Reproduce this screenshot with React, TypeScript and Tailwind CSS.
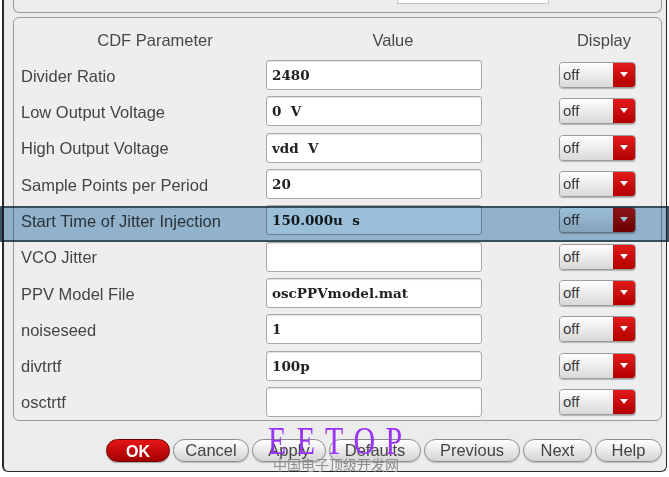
import React from 'react';

const rows: { label: string; value: string }[] = [
  { label: 'Divider Ratio', value: '2480' },
  { label: 'Low Output Voltage', value: '0 V' },
  { label: 'High Output Voltage', value: 'vdd V' },
  { label: 'Sample Points per Period', value: '20' },
  { label: 'Start Time of Jitter Injection', value: '150.000u s' },
  { label: 'VCO Jitter', value: '' },
  { label: 'PPV Model File', value: 'oscPPVmodel.mat' },
  { label: 'noiseseed', value: '1' },
  { label: 'divtrtf', value: '100p' },
  { label: 'osctrtf', value: '' },
];

const buttons = [
  { label: 'Cancel', w: 'w-[76px]' },
  { label: 'Apply', w: 'w-[74px]' },
  { label: 'Defaults', w: 'w-[92px]' },
  { label: 'Previous', w: 'w-[96px]' },
  { label: 'Next', w: 'w-[69px]' },
  { label: 'Help', w: 'w-[67px]' },
];

const OffSelect = () => (
  <div className="flex h-[26px] w-[77px] overflow-hidden rounded-[4px] border border-[#9c9c9c] shadow-[0_1px_1px_rgba(0,0,0,0.25)]">
    <div className="flex-1 bg-gradient-to-b from-white to-[#d9d9d9] pl-[3px] text-[15px] leading-[24px] text-[#3a3a3a]">
      off
    </div>
    <div className="flex w-[22px] items-center justify-center bg-gradient-to-b from-[#e31a1a] to-[#b30000]">
      <svg width="8" height="6" viewBox="0 0 8 6">
        <path d="M0 0 H8 L4 5 Z" fill="#fff" />
      </svg>
    </div>
  </div>
);

export default function App() {
  return (
    <div className="relative h-[477px] w-[669px] overflow-hidden bg-white font-['Liberation_Sans',sans-serif]">
      <div className="ml-[2px] h-[472px] w-[665px] rounded-b-[6px] border-b border-l-2 border-r border-[#2a2a2a] bg-[#ececec] pl-[9px] pr-[4px]">
        {/* top panel (cut off) */}
        <div className="flex h-[13px] w-[649px] rounded-b-[6px] border-x border-b border-[#9a9a9a]">
          <div className="ml-[383px] h-[4px] w-[152px] border-x border-b border-[#c4c4c4] bg-white" />
        </div>

        {/* parameter panel */}
        <div className="mt-[4px] w-[649px] rounded-[6px] border border-[#9a9a9a] bg-[#eeeeee]">
          <div className="flex h-[39px] pt-[13px] text-[16.5px] leading-[19px] text-[#484848]">
            <span className="ml-[7px] w-[268px] text-center">CDF Parameter</span>
            <span className="w-[208px] text-center">Value</span>
            <span className="ml-[72px] w-[70px] text-center">Display</span>
          </div>
          {rows.map((r, i) => (
            <div key={r.label} className="relative flex h-[36.3px] items-center">
              <span className="w-[252px] pl-[7px] pt-[2px] text-[16.5px] text-[#444]">{r.label}</span>
              <div className="h-[30px] w-[216px] rounded-[3px] border border-[#a9a9a9] bg-white pl-[5px] font-['DejaVu_Serif',serif] text-[13.5px] font-bold leading-[28px] whitespace-pre text-[#222] shadow-[inset_0_1px_1px_rgba(0,0,0,0.12)]">
                {r.value.replace(' ', '  ')}
              </div>
              <div className="ml-[77px]">
                <OffSelect />
              </div>
              {i === 4 && (
                <div className="pointer-events-none absolute -left-[14px] -right-[8px] top-[4px] h-[36px] border-2 border-[#3b5363] bg-[#9bbfd9] mix-blend-multiply" />
              )}
            </div>
          ))}
        </div>

        {/* buttons */}
        <div className="mt-[18px] flex w-[649px] justify-end gap-[3px]">
          <button className="h-[23px] w-[64px] rounded-full border border-[#6e0000] bg-gradient-to-b from-[#e61616] to-[#a30000] text-[16px] font-bold text-white shadow-[0_1px_1px_rgba(0,0,0,0.3)]">
            OK
          </button>
          {buttons.map((b) => (
            <button
              key={b.label}
              className={`h-[23px] ${b.w} rounded-full border border-[#8c8c8c] bg-gradient-to-b from-white to-[#d4d4d4] text-[16.5px] leading-[20px] text-[#444] shadow-[0_1px_1px_rgba(0,0,0,0.2)]`}
            >
              {b.label}
            </button>
          ))}
        </div>
      </div>

      {/* watermark */}
      <div className="pointer-events-none absolute left-[268px] top-[421px] origin-left scale-x-[0.75] font-['Liberation_Serif',serif] text-[40px] leading-[40px] tracking-[2px] whitespace-pre text-[#9a33f5]">
        E E T O P
      </div>
      <div className="pointer-events-none absolute left-[273px] top-[456px] font-['Noto_Sans_CJK_SC',sans-serif] text-[14px] leading-[16px] text-[#8e8e8e]">
        中国电子顶级开发网
      </div>
    </div>
  );
}
